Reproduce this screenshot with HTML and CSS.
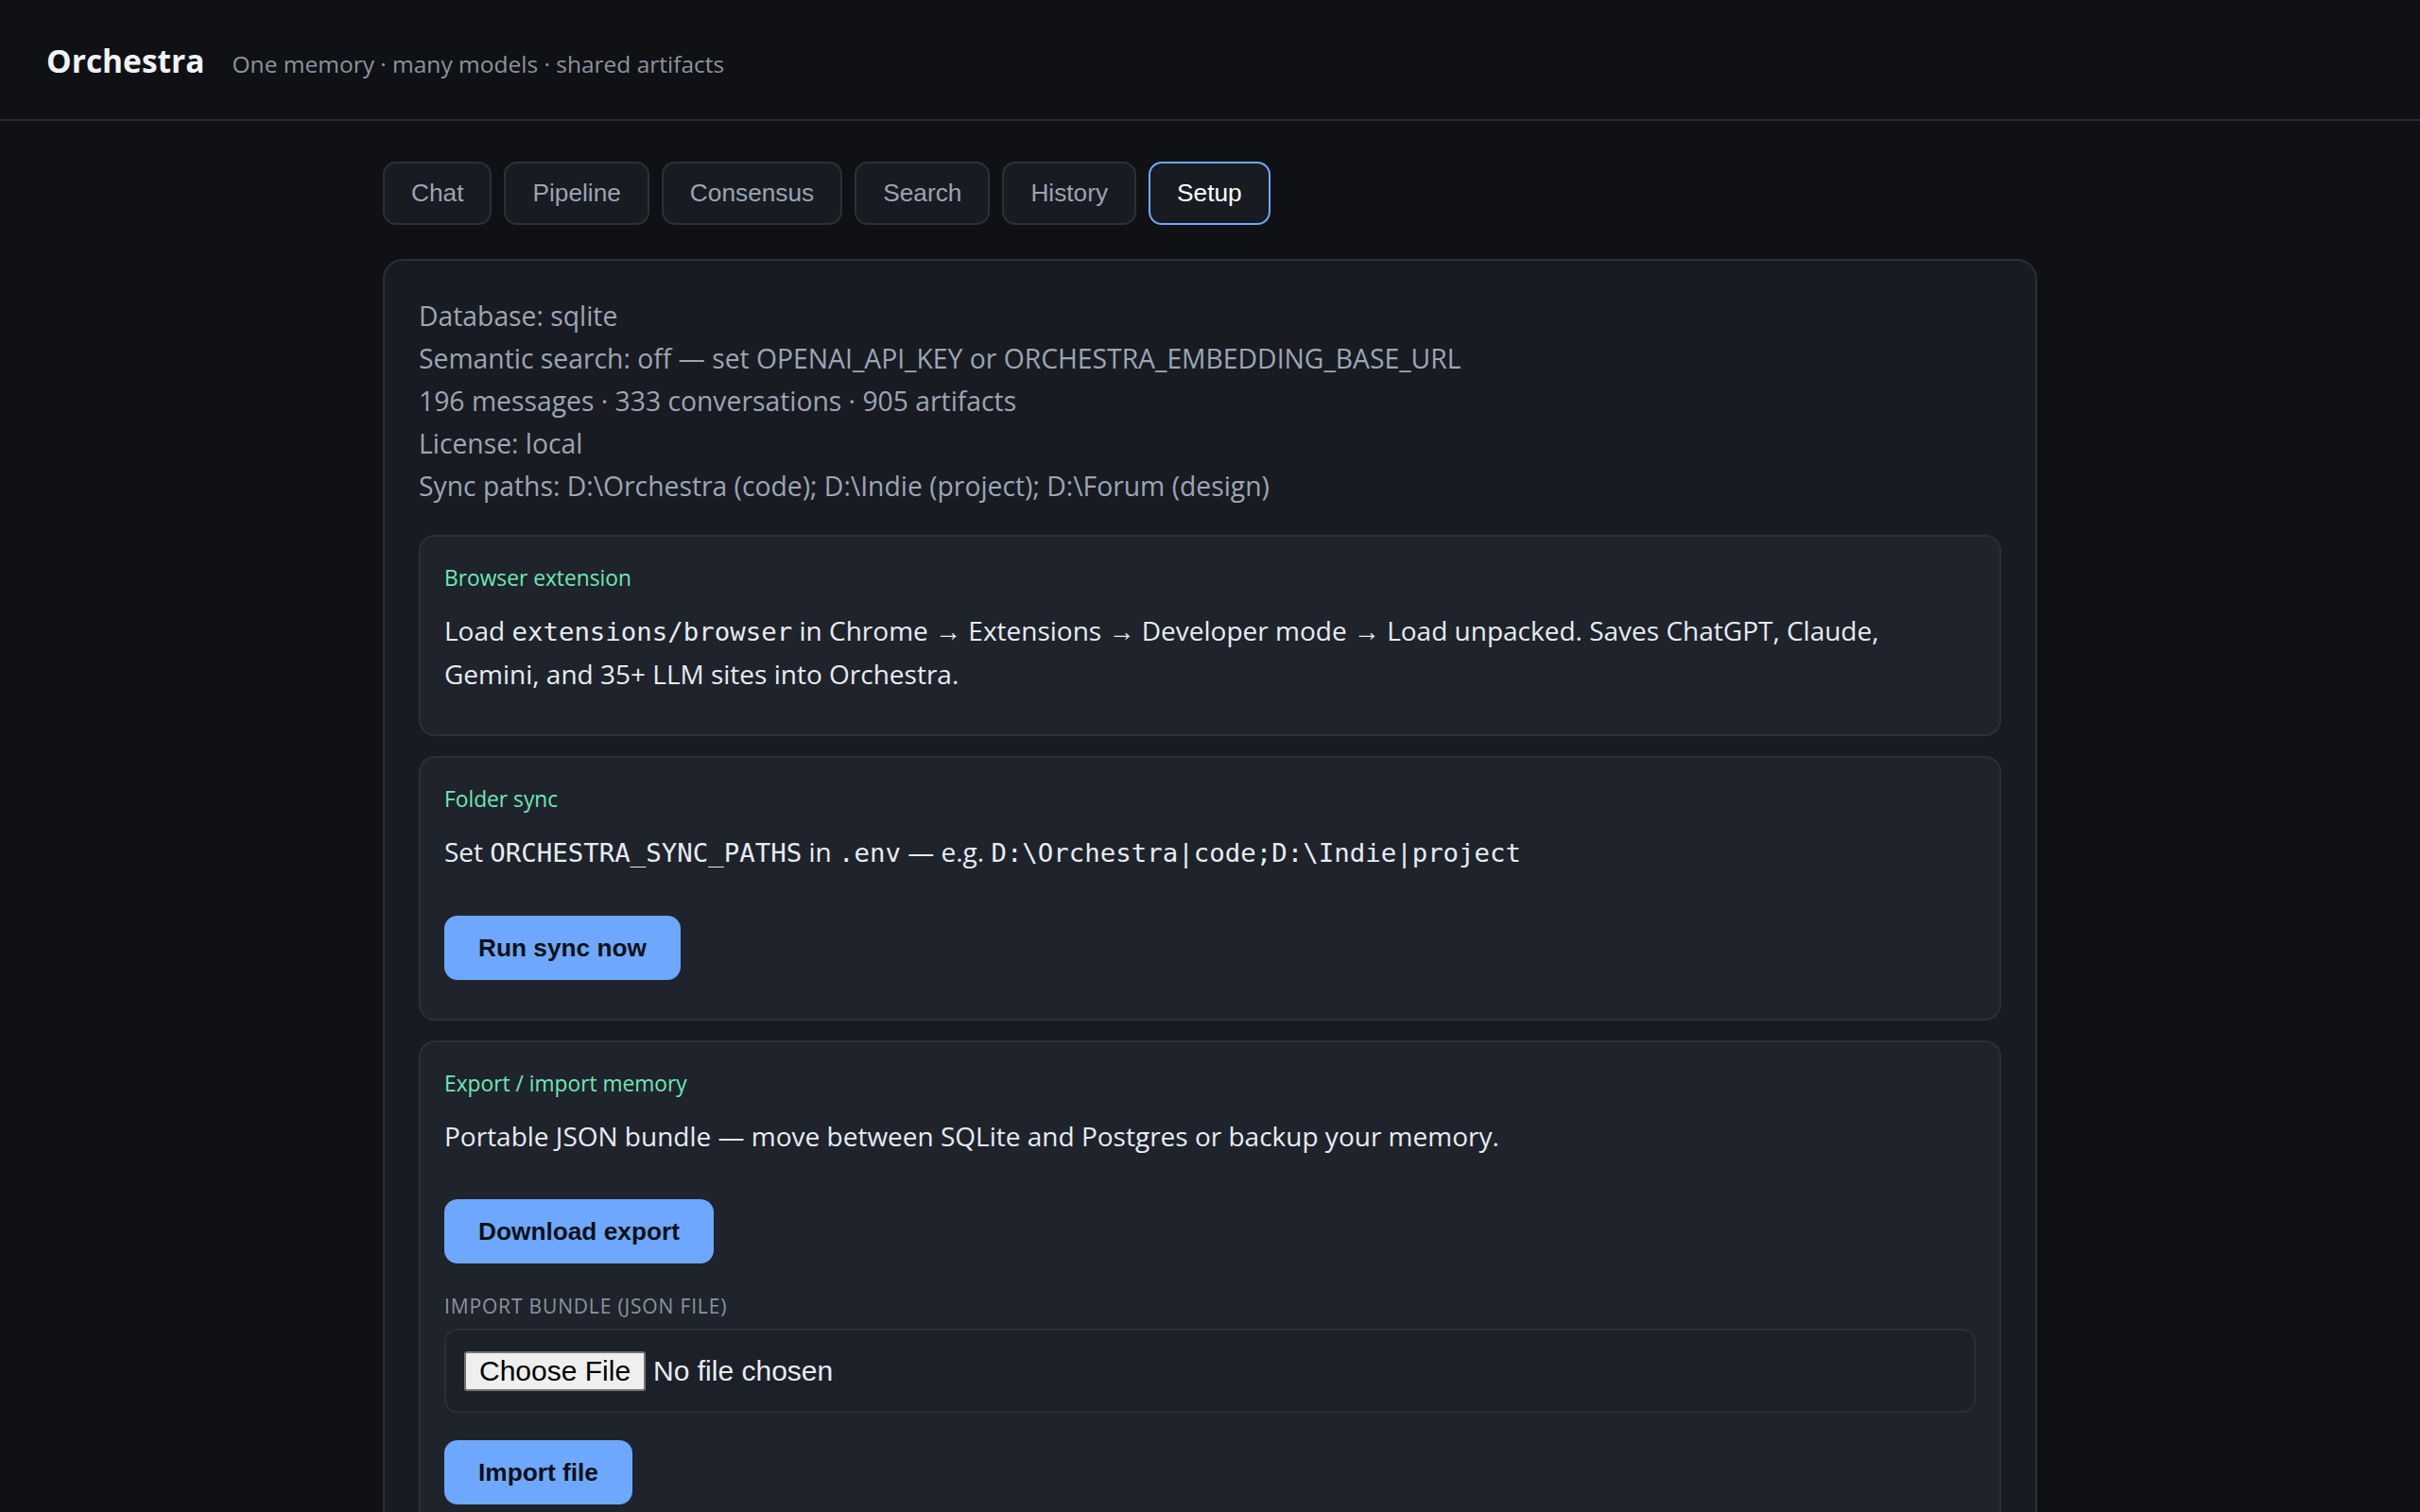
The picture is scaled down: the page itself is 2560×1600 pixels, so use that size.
FILE: index.html
```html
<!DOCTYPE html>
<html lang="en">
<head>
    <meta charset="UTF-8">
    <meta name="viewport" content="width=device-width, initial-scale=1.0">
    <title>Orchestra</title>
    <link rel="stylesheet" href="styles.css">
</head>
<body>
    <header class="topbar">
        <span class="brand">Orchestra</span>
        <span class="tagline">One memory · many models · shared artifacts</span>
    </header>

    <main class="wrap">
        <nav class="tabs">
            <button class="tab">Chat</button>
            <button class="tab">Pipeline</button>
            <button class="tab">Consensus</button>
            <button class="tab">Search</button>
            <button class="tab">History</button>
            <button class="tab active">Setup</button>
        </nav>

        <section class="panel">
            <div class="stats">
                <div>Database: sqlite</div>
                <div>Semantic search: off — set OPENAI_API_KEY or ORCHESTRA_EMBEDDING_BASE_URL</div>
                <div>196 messages · 333 conversations · 905 artifacts</div>
                <div>License: local</div>
                <div>Sync paths: D:\Orchestra (code); D:\Indie (project); D:\Forum (design)</div>
            </div>

            <div class="box">
                <div class="box-title">Browser extension</div>
                <p>Load <code>extensions/browser</code> in Chrome → Extensions → Developer mode → Load unpacked. Saves ChatGPT, Claude, Gemini, and 35+ LLM sites into Orchestra.</p>
            </div>

            <div class="box">
                <div class="box-title">Folder sync</div>
                <p>Set <code>ORCHESTRA_SYNC_PATHS</code> in <code>.env</code> — e.g. <code>D:\Orchestra|code;D:\Indie|project</code></p>
                <button class="primary">Run sync now</button>
            </div>

            <div class="box">
                <div class="box-title">Export / import memory</div>
                <p>Portable JSON bundle — move between SQLite and Postgres or backup your memory.</p>
                <button class="primary">Download export</button>
                <label class="field-label" for="bundle">Import bundle (JSON file)</label>
                <div class="file-box">
                    <input type="file" id="bundle" accept=".json">
                </div>
                <button class="primary">Import file</button>
            </div>
        </section>
    </main>
</body>
</html>
```

FILE: styles.css
```css
body {
    margin: 0;
    background: #0f1115;
    color: #e6edf3;
    font-family: "Segoe UI", "Open Sans", sans-serif;
}
.topbar {
    display: flex;
    align-items: baseline;
    gap: 29px;
    height: 128px;
    box-sizing: border-box;
    padding: 41px 49px 0;
    border-bottom: 2px solid #262a31;
}
.brand {
    font-size: 33.5px;
    font-weight: 700;
    color: #f0f3f7;
}
.tagline {
    font-size: 24.5px;
    color: #8b949e;
}
.wrap {
    width: 1750px;
    margin: 0 auto;
    padding-top: 43px;
}
.tabs {
    display: flex;
    gap: 13px;
    margin-bottom: 36px;
}
.tab {
    height: 67px;
    padding: 0 28px;
    font-family: "Liberation Sans", Arial, sans-serif;
    font-size: 26.25px;
    color: #9aa4b2;
    background: #181b22;
    border: 2px solid #2b3038;
    border-radius: 14px;
}
.tab.active {
    color: #ffffff;
    border-color: #6ea8fe;
}
.panel {
    background: #181b22;
    border: 2px solid #2a2f38;
    border-radius: 21px;
    padding: 36px 36px 40px;
}
.stats {
    font-size: 28.3px;
    line-height: 45px;
    color: #9ca6b4;
    margin-bottom: 29px;
}
.box {
    background: #1f232b;
    border: 2px solid #2a2f38;
    border-radius: 17px;
    padding: 26px 25px 41px;
    margin-bottom: 21px;
}
.box-title {
    font-size: 22.75px;
    line-height: 36px;
    color: #6ee7b7;
}
.box p {
    margin: 15px 0 0;
    font-size: 28px;
    line-height: 45px;
}
code {
    font-family: "DejaVu Sans Mono", "Liberation Mono", monospace;
    font-size: 27.4px;
}
.primary {
    display: block;
    height: 68px;
    margin-top: 44px;
    padding: 0 36px;
    font-family: "Liberation Sans", Arial, sans-serif;
    font-size: 26.25px;
    font-weight: 700;
    color: #0d1117;
    background: #6ea8fe;
    border: none;
    border-radius: 14px;
}
.field-label {
    display: block;
    margin-top: 28px;
    font-size: 21px;
    line-height: 34px;
    letter-spacing: 0.04em;
    text-transform: uppercase;
    color: #8b949e;
}
.file-box {
    margin-top: 7px;
    height: 89px;
    box-sizing: border-box;
    display: flex;
    align-items: center;
    padding: 0 19px;
    background: #1c2028;
    border: 2px solid #2a2f38;
    border-radius: 14px;
}
.file-box input {
    font-family: "Liberation Sans", Arial, sans-serif;
    font-size: 30px;
    color: #e6edf3;
}
.file-box input::file-selector-button {
    height: 42px;
    margin-right: 8px;
    padding: 0 14px;
    font-family: inherit;
    font-size: 30px;
    color: #000;
    background: #efefef;
    border: 2px solid #767676;
    border-radius: 3px;
}
.box .primary + .field-label + .file-box + .primary {
    margin-top: 29px;
}
```
